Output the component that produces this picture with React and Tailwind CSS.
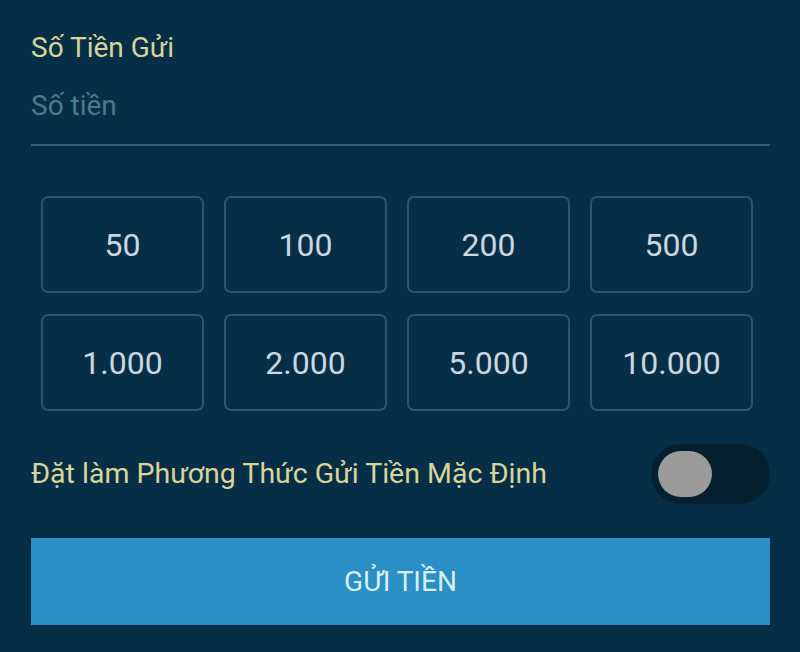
import React from 'react';

const amounts = ['50', '100', '200', '500', '1.000', '2.000', '5.000', '10.000'];

const App = () => {
  return (
    <div
      className="w-[800px] h-[652px] bg-[#062f47] pl-[31px] pr-[30px] pt-[30px] overflow-hidden"
      style={{ fontFamily: 'Roboto, "Noto Sans", sans-serif' }}
    >
      {/* Amount field */}
      <div className="text-[28px] leading-[36px] text-[#d8d49a]">Số Tiền Gửi</div>
      <div className="mt-[22px] pb-[20px] border-b-2 border-[#2e5e74] text-[28px] leading-[36px] text-[#4b7a8f]">
        Số tiền
      </div>

      {/* Quick amounts */}
      <div className="grid grid-cols-4 gap-x-[20px] gap-y-[21px] ml-[10px] mr-[17px] mt-[50px]">
        {amounts.map((a) => (
          <div
            key={a}
            className="h-[97px] flex items-center justify-center rounded-[7px] border-2 border-[#27576d] text-[32px] text-[#c9d7df]"
          >
            {a}
          </div>
        ))}
      </div>

      {/* Default switch */}
      <div className="flex items-center justify-between mt-[33px]">
        <span className="text-[28.5px] text-[#d8d49a]">Đặt làm Phương Thức Gửi Tiền Mặc Định</span>
        <div className="w-[119px] h-[60px] rounded-full bg-[#04202f] flex items-center px-[7px]">
          <div className="w-[54px] h-[46px] rounded-full bg-[#9b9b9b]" />
        </div>
      </div>

      {/* Submit */}
      <div className="mt-[34px] h-[87px] bg-[#2a8fc3] flex items-center justify-center text-[28px] text-[#dcedf6]">
        GỬI TIỀN
      </div>
    </div>
  );
};

export default App;
